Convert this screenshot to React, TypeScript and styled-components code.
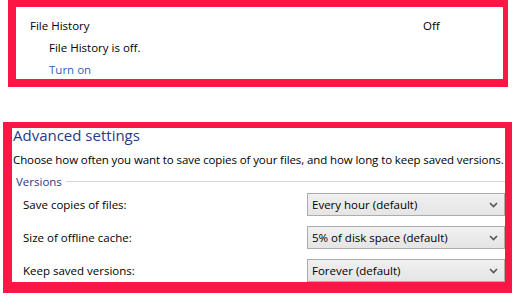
import React from "react";
import styled, { createGlobalStyle } from "styled-components";

const GlobalStyle = createGlobalStyle`
  body {
    margin: 0;
    background: #ffffff;
    font-family: "Open Sans", "Noto Sans", sans-serif;
    color: #000000;
  }
`;

const Page = styled.div`
  width: 512px;
  height: 297px;
  overflow: hidden;
  display: flex;
  flex-direction: column;
`;

const HistoryBox = styled.section`
  flex-shrink: 0;
  margin-left: 8px;
  width: 500px;
  height: 87px;
  box-sizing: border-box;
  border: solid #fb1646;
  border-width: 7px 5px 8px 8px;
  padding: 7px 0 0 14px;
`;

const HistoryInner = styled.div`
  display: flex;
  flex-direction: column;
`;

const HeaderRow = styled.div`
  display: flex;
  height: 22px;
  align-items: center;
  font-size: 11.5px;
`;

const HeaderLabel = styled.div`
  width: 393px;
`;

const StatusText = styled.div`
  font-size: 11.5px;
  height: 22px;
  display: flex;
  align-items: center;
  padding-left: 19px;
`;

const LinkText = styled.a`
  font-size: 11.5px;
  color: #2e64b0;
  padding-left: 19px;
  height: 22px;
  display: flex;
  align-items: center;
  text-decoration: none;
`;

const AdvancedBox = styled.section`
  flex-shrink: 0;
  margin-top: 35px;
  margin-left: 3px;
  width: 509px;
  height: 171px;
  box-sizing: border-box;
  border: solid #fb1646;
  border-width: 6px 7px 11px 9px;
  display: flex;
  flex-direction: column;
`;

const Title = styled.h2`
  margin: 0;
  padding-left: 1px;
  font-size: 15px;
  font-weight: 400;
  color: #1f3c88;
  line-height: 14px;
  height: 14px;
`;

const Description = styled.p`
  margin: 0;
  margin-top: 10px;
  padding-left: 1px;
  font-size: 11.5px;
  line-height: 16px;
  white-space: nowrap;
  letter-spacing: -0.1px;
`;

const GroupHeader = styled.div`
  display: flex;
  align-items: center;
  gap: 4px;
  margin-top: 6px;
  padding-left: 4px;
  height: 16px;
`;

const GroupTitle = styled.span`
  font-size: 11.5px;
  color: #1f3c88;
`;

const GroupLine = styled.div`
  flex: 1;
  height: 1px;
  background: #d5d5d5;
`;

const Rows = styled.div`
  display: flex;
  flex-direction: column;
  gap: 10px;
  margin-top: 4px;
`;

const Row = styled.div`
  display: flex;
  align-items: center;
  height: 23px;
  padding-left: 11px;
`;

const RowLabel = styled.div`
  flex-shrink: 0;
  font-size: 11.5px;
  width: 284px;
`;

const Select = styled.div`
  flex-shrink: 0;
  width: 198px;
  height: 23px;
  box-sizing: border-box;
  border: 1px solid #acacac;
  background: linear-gradient(#f0f0f0, #e5e5e5);
  display: flex;
  align-items: center;
  justify-content: space-between;
  padding: 0 6px 0 4px;
  font-size: 11.5px;
`;

const Chevron = () => (
  <svg width="9" height="6" viewBox="0 0 9 6">
    <path d="M1 1 L4.5 4.5 L8 1" fill="none" stroke="#555555" strokeWidth="1.6" />
  </svg>
);

const settings = [
  { label: "Save copies of files:", value: "Every hour (default)" },
  { label: "Size of offline cache:", value: "5% of disk space (default)" },
  { label: "Keep saved versions:", value: "Forever (default)" },
];

export default function App() {
  return (
    <Page>
      <GlobalStyle />
      <HistoryBox>
        <HistoryInner>
          <HeaderRow>
            <HeaderLabel>File History</HeaderLabel>
            <span>Off</span>
          </HeaderRow>
          <StatusText>File History is off.</StatusText>
          <LinkText href="#">Turn on</LinkText>
        </HistoryInner>
      </HistoryBox>
      <AdvancedBox>
        <Title>Advanced settings</Title>
        <Description>
          Choose how often you want to save copies of your files, and how long to keep saved versions.
        </Description>
        <GroupHeader>
          <GroupTitle>Versions</GroupTitle>
          <GroupLine />
        </GroupHeader>
        <Rows>
          {settings.map((s) => (
            <Row key={s.label}>
              <RowLabel>{s.label}</RowLabel>
              <Select>
                <span>{s.value}</span>
                <Chevron />
              </Select>
            </Row>
          ))}
        </Rows>
      </AdvancedBox>
    </Page>
  );
}
